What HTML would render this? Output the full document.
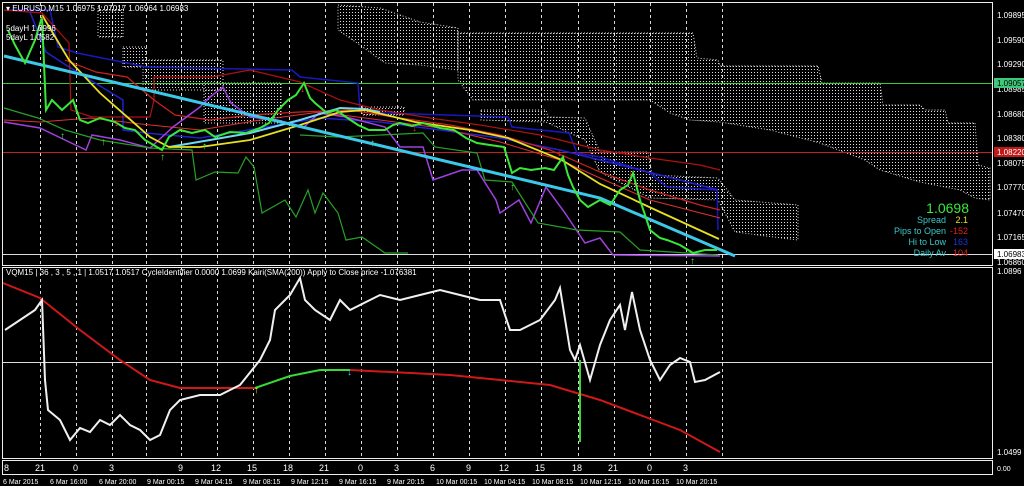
<!DOCTYPE html>
<html><head><meta charset="utf-8"><style>
html,body{margin:0;padding:0;background:#000;width:1024px;height:486px;overflow:hidden}
svg{display:block;font-family:"Liberation Sans",sans-serif}
</style></head><body>
<svg width="1024" height="486" viewBox="0 0 1024 486" xmlns="http://www.w3.org/2000/svg">
<defs>
<pattern id="dots" width="3" height="3" patternUnits="userSpaceOnUse"><rect x="1" y="0" width="1" height="1" fill="#ddd"/></pattern>
</defs>
<rect width="1024" height="486" fill="#000"/>
<!-- cloud -->
<g fill="url(#dots)" stroke="#ddd" stroke-width="1" stroke-dasharray="1,2">
<path d="M98,7 L123,7 L123,37 L98,37 Z"/>
<path d="M123,47 L146,47 L146,67 L123,67 Z"/>
<path d="M143,60 L223,60 L223,90 L143,90 Z"/>
<path d="M204,83 L281,83 L281,123 L204,123 Z"/>
<path d="M338,5 L380,8 L420,22 L458,28 L458,70 L420,65 L385,63 L360,45 L338,30 Z"/>
<path d="M458,33 L693,33 L697,58 L718,60 L720,66 L818,66 L822,83 L880,83 L883,105 L920,105 L925,110 L945,110 L948,123 L975,123 L978,165 L990,168 L990,200 L975,198 L960,190 L920,182 L880,170 L865,160 L820,143 L770,130 L720,122 L690,120 L670,113 L650,100 L473,100 L458,80 Z"/>
<path d="M362,107 L404,107 L404,115 L362,115 Z"/>
<path d="M481,110 L546,110 L548,117 L585,118 L600,152 L648,152 L652,175 L718,178 L735,200 L798,205 L798,240 L735,232 L718,200 L650,198 L600,172 L585,140 L546,122 L481,120 Z"/>
</g>
<!-- grid -->
<g stroke="#fff" stroke-width="1" stroke-dasharray="3,3" opacity="0.85">
<line x1="40.5" y1="3" x2="40.5" y2="458"/><line x1="76.5" y1="3" x2="76.5" y2="458"/><line x1="112.5" y1="3" x2="112.5" y2="458"/><line x1="146.5" y1="3" x2="146.5" y2="458"/><line x1="181.5" y1="3" x2="181.5" y2="458"/><line x1="217.5" y1="3" x2="217.5" y2="458"/><line x1="253.5" y1="3" x2="253.5" y2="458"/><line x1="289.5" y1="3" x2="289.5" y2="458"/><line x1="325.5" y1="3" x2="325.5" y2="458"/><line x1="361.5" y1="3" x2="361.5" y2="458"/><line x1="397.5" y1="3" x2="397.5" y2="458"/><line x1="433.5" y1="3" x2="433.5" y2="458"/><line x1="469.5" y1="3" x2="469.5" y2="458"/><line x1="505.5" y1="3" x2="505.5" y2="458"/><line x1="541.5" y1="3" x2="541.5" y2="458"/><line x1="578.5" y1="3" x2="578.5" y2="458"/><line x1="614.5" y1="3" x2="614.5" y2="458"/><line x1="650.5" y1="3" x2="650.5" y2="458"/><line x1="686.5" y1="3" x2="686.5" y2="458"/><line x1="722.5" y1="3" x2="722.5" y2="458"/>
</g>
<!-- horizontal lines -->
<line x1="2" y1="83.5" x2="993" y2="83.5" stroke="#3ec83e"/>
<line x1="2" y1="152.5" x2="993" y2="152.5" stroke="#c02020"/>
<line x1="2" y1="254.5" x2="993" y2="254.5" stroke="#ddd"/>
<line x1="2" y1="362.5" x2="993" y2="362.5" stroke="#ddd"/>
<!-- main lines -->
<polyline fill="none" stroke="#1818c0" stroke-width="1.5" points="8,10 50,10 58,47 77,53 127,63 146,67 292,70 300,77 358,83 360,110 385,113 508,117 512,127 569,133 577,153 600,157 650,173 667,187 717,190 718,230"/>
<polyline fill="none" stroke="#2020d0" stroke-width="1.5" points="30,12 46,52 69,67 123,100 123,130 146,133 200,138 260,128 320,118 380,122 440,130 500,138 560,150 620,165 680,180 718,190"/>
<polyline fill="none" stroke="#b01010" stroke-width="1.2" points="4,10 42,13 69,43 71,110 92,117 150,117 154,100 154,77 212,77 250,70 300,82 340,100 380,110 430,118 480,125 540,135 600,150 650,158 700,165 720,170"/>
<polyline fill="none" stroke="#d02020" stroke-width="1.2" points="65,60 96,72 127,77 154,100 175,115 210,120 250,115 300,112 350,110 400,118 450,125 500,135 550,150 600,172 650,190 700,205 720,210"/>
<polyline fill="none" stroke="#e03030" stroke-width="1" points="4,120 40,122 90,118 150,125 200,130 260,120 320,112 380,120 440,128 500,142 560,160 600,178 650,200 720,218"/>
<polyline fill="none" stroke="#a040e0" stroke-width="1.5" points="4,122 40,128 65,140 86,150 92,135 120,140 150,148 173,127 200,107 210,97 223,87 231,103 250,117 277,120 304,127 319,113 346,117 385,127 400,147 423,147 433,180 462,170 477,170 496,200 500,213 519,200 531,223 546,187 565,213 585,243 600,238 613,255 720,256"/>
<polyline fill="none" stroke="#28a028" stroke-width="1.2" points="4,108 38,118 65,130 100,140 150,148 192,150 196,180 215,172 238,173 246,157 254,167 262,213 285,200 296,217 308,190 315,213 323,193 338,213 346,240 362,237 385,253 408,253"/>
<polyline fill="none" stroke="#28a028" stroke-width="1.2" points="300,135 338,137 423,133 435,147 477,153 485,180 512,182 538,223 577,230 620,232 640,250 718,255"/>
<polyline fill="none" stroke="#70d8f0" stroke-width="2" points="169,147 210,140 250,133 300,120 340,108 365,109 380,112"/>
<polyline fill="none" stroke="#e8e020" stroke-width="1.8" points="42,15 69,60 100,93 150,137 169,147 200,147 250,140 300,125 340,112 365,110 415,122 470,130 508,138 562,160 600,184 660,212 719,239"/>
<polyline fill="none" stroke="#3cc8e8" stroke-width="3" points="4,56 600,198 735,256"/>
<!-- price -->
<polyline fill="none" stroke="#38e838" stroke-width="2" points="8,30 15,45 25,63 35,40 42,17 46,110 52,100 62,110 73,100 80,120 88,123 100,118 115,122 125,128 135,130 145,140 162,150 169,137 180,130 192,133 205,130 215,137 230,132 246,133 260,128 269,123 278,110 288,100 296,95 304,83 310,98 315,103 327,113 336,110 346,117 358,125 369,130 385,130 393,125 400,123 412,126 423,123 440,128 454,130 466,138 477,143 490,145 504,147 512,173 520,168 531,170 545,168 554,170 563,157 568,175 573,187 580,200 588,207 600,200 610,205 620,190 628,185 633,173 640,200 650,230 660,238 667,240 680,245 693,253 705,250 717,250"/>
<!-- arrows -->
<text x="40" y="19" fill="#e03030" font-size="10">↓</text>
<text x="114" y="126" fill="#e03030" font-size="10">↓</text>
<text x="300" y="92" fill="#e03030" font-size="10">↓</text>
<text x="412" y="131" fill="#e03030" font-size="10">↓</text>
<text x="557" y="156" fill="#e03030" font-size="10">↓</text>
<text x="628" y="176" fill="#e03030" font-size="10">↓</text>
<text x="60" y="139" fill="#38e838" font-size="10">↑</text>
<text x="101" y="145" fill="#38e838" font-size="10">↑</text>
<text x="160" y="160" fill="#38e838" font-size="10">↑</text>
<text x="202" y="149" fill="#38e838" font-size="10">↑</text>
<text x="370" y="146" fill="#38e838" font-size="10">↑</text>
<text x="510" y="190" fill="#38e838" font-size="10">↑</text>
<text x="690" y="264" fill="#38e838" font-size="10">↑</text>
<!-- indicator panel -->
<polyline fill="none" stroke="#d01818" stroke-width="2" points="3,283 40,298 80,330 120,360 150,380 180,388 255,388"/>
<polyline fill="none" stroke="#38d838" stroke-width="2" points="255,388 290,376 320,370 350,370"/>
<polyline fill="none" stroke="#d01818" stroke-width="2" points="350,370 450,375 550,385 600,400 640,415 680,430 720,452"/>
<line x1="580" y1="360" x2="580" y2="442" stroke="#38d838" stroke-width="2"/>
<text x="254" y="393" fill="#e8e020" font-size="10">↑</text>
<text x="347" y="375" fill="#3cc8e8" font-size="10">↓</text>
<polyline fill="none" stroke="#f0f0f0" stroke-width="2" points="5,330 20,320 35,310 42,300 45,380 48,410 60,420 70,440 80,428 90,432 100,420 110,425 120,415 130,425 140,430 150,440 160,435 170,410 180,400 200,395 220,395 240,385 260,360 270,340 275,310 285,300 290,295 300,278 305,300 315,310 330,320 340,300 350,310 370,300 380,295 400,300 420,295 440,290 460,295 480,300 500,300 510,330 520,330 540,320 555,300 560,288 570,350 575,360 580,345 590,380 600,345 610,320 620,305 625,330 632,292 640,330 650,360 660,380 670,365 680,358 690,362 695,382 705,380 720,372"/>
<!-- frames -->
<g fill="none" stroke="#eee" stroke-width="1">
<rect x="2.5" y="2.5" width="990" height="263"/>
<rect x="2.5" y="267.5" width="990" height="191"/>
<rect x="2.5" y="460.5" width="990" height="14"/>
</g>
<!-- top-left text -->
<g font-size="8" fill="#fff">
<text x="6" y="11">▾ EURUSD,M15  1.06975  1.07017  1.06964  1.06983</text>
<text x="6" y="31">5dayH 1.0996</text>
<text x="6" y="40">5dayL 1.0582</text>
<text x="6" y="275">VQM15 | 36 , 3 , 5 , 1 | 1.0517 1.0517  CycleIdentifier 0.0000 1.0699  Kairi(SMA(200)) Apply to Close price -1.076381</text>
</g>
<!-- info -->
<g font-size="9" text-anchor="end">
<text x="969" y="213" fill="#38e838" font-size="14">1.0698</text>
<text x="946" y="223" fill="#3cc8c8">Spread</text><text x="968" y="223" fill="#e8e020">2.1</text>
<text x="946" y="234" fill="#3cc8c8">Pips to Open</text><text x="968" y="234" fill="#e02020">-152</text>
<text x="946" y="245" fill="#3cc8c8">Hi to Low</text><text x="968" y="245" fill="#2030e0">163</text>
<text x="946" y="256" fill="#3cc8c8">Daily Av</text><text x="968" y="256" fill="#e02020">104</text>
</g>
<!-- right axis -->
<g font-size="8" fill="#fff">
<text x="997" y="18">1.09895</text><text x="997" y="43">1.09590</text><text x="997" y="67">1.09290</text><text x="997" y="92">1.08985</text><text x="997" y="117">1.08680</text><text x="997" y="141">1.08380</text><text x="997" y="166">1.08075</text><text x="997" y="190">1.07770</text><text x="997" y="216">1.07470</text><text x="997" y="240">1.07165</text><text x="997" y="265">1.06860</text>
<text x="997" y="274">1.0896</text><text x="997" y="455">1.0499</text>
</g>
<rect x="994" y="78" width="30" height="10" fill="#3ec87a"/><text x="997" y="86" font-size="8" fill="#000">1.09057</text>
<rect x="994" y="147" width="30" height="10" fill="#c01818"/><text x="997" y="155" font-size="8" fill="#fff">1.08220</text>
<rect x="994" y="249" width="30" height="10" fill="#fff"/><text x="997" y="257" font-size="8" fill="#000">1.06983</text>
<!-- bottom axis -->
<g font-size="9" fill="#fff">
<text x="4" y="471">8</text><text x="35" y="471">21</text><text x="73" y="471">0</text><text x="109" y="471">3</text><text x="178" y="471">9</text><text x="211" y="471">12</text><text x="247" y="471">15</text><text x="283" y="471">18</text><text x="319" y="471">21</text><text x="358" y="471">0</text><text x="394" y="471">3</text><text x="430" y="471">6</text><text x="466" y="471">9</text><text x="499" y="471">12</text><text x="535" y="471">15</text><text x="572" y="471">18</text><text x="608" y="471">21</text><text x="647" y="471">0</text><text x="683" y="471">3</text>
</g>
<g font-size="7" fill="#fff">
<text x="3" y="484">6 Mar 2015</text><text x="50" y="484">6 Mar 16:00</text><text x="99" y="484">6 Mar 20:00</text><text x="147" y="484">9 Mar 00:15</text><text x="195" y="484">9 Mar 04:15</text><text x="243" y="484">9 Mar 08:15</text><text x="291" y="484">9 Mar 12:15</text><text x="339" y="484">9 Mar 16:15</text><text x="387" y="484">9 Mar 20:15</text><text x="436" y="484">10 Mar 00:15</text><text x="484" y="484">10 Mar 04:15</text><text x="532" y="484">10 Mar 08:15</text><text x="580" y="484">10 Mar 12:15</text><text x="628" y="484">10 Mar 16:15</text><text x="676" y="484">10 Mar 20:15</text>
<text x="997" y="471">0.00</text>
</g>
</svg>
</body></html>
